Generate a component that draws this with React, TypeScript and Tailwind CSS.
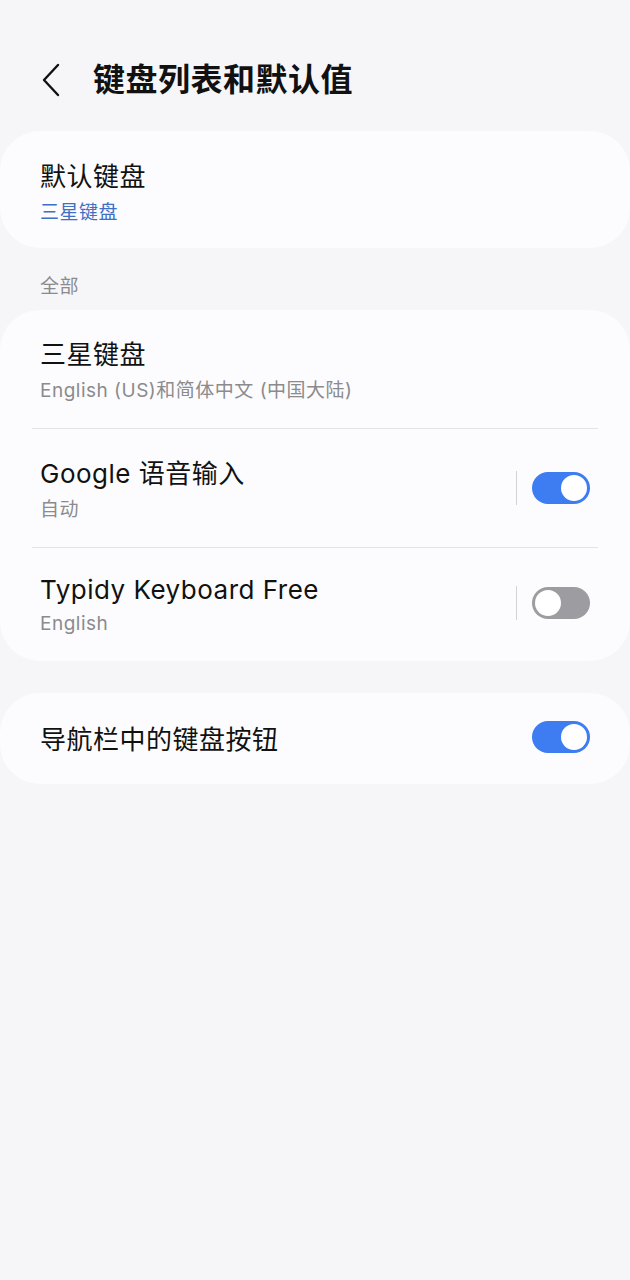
import React from 'react';

const font = { fontFamily: '"Inter", "Noto Sans CJK SC", sans-serif' };

function Toggle({ on }: { on: boolean }) {
  return (
    <div
      className={`flex h-[32px] w-[58px] shrink-0 items-center rounded-full p-[3px] ${
        on ? 'justify-end bg-[#3e7cf2]' : 'justify-start bg-[#9d9da1]'
      }`}
    >
      <div className="h-[26px] w-[26px] rounded-full bg-white" />
    </div>
  );
}

function KeyboardRow({
  title,
  sub,
  toggle,
  last,
}: {
  title: string;
  sub: string;
  toggle?: boolean;
  last?: boolean;
}) {
  return (
    <div>
      <div className={`flex items-center px-[40px] pb-[23px] ${last ? 'pt-[25px]' : 'pt-[28px]'}`}>
        <div className="min-w-0 flex-grow">
          <div className="text-[26px] leading-[34px] text-[#111111]">{title}</div>
          <div className={`${last ? 'mt-[3px]' : 'mt-[5px]'} text-[19px] leading-[28px] text-[#8b8b8d]`}>{sub}</div>
        </div>
        {toggle !== undefined && (
          <div className="mb-[6px] flex items-center">
            <div className="mr-[15px] h-[34px] w-[1.5px] bg-[#d3d3d6]" />
            <Toggle on={toggle} />
          </div>
        )}
      </div>
      {!last && <div className="mx-[32px] h-px bg-[#e4e4e7]" />}
    </div>
  );
}

export default function App() {
  return (
    <div className="min-h-[1280px] w-full bg-[#f6f6f8] tracking-[0.5px]" style={font}>
      {/* Header */}
      <div className="flex items-center pt-[58px]">
        <svg className="ml-[38px]" width="26" height="44" viewBox="0 0 26 44">
          <path d="M20 7 L6 22 L20 37" fill="none" stroke="#111111" strokeWidth="2.4" strokeLinecap="round" strokeLinejoin="round" />
        </svg>
        <h1 className="ml-[29px] text-[32px] font-bold leading-[44px] text-[#111111]">键盘列表和默认值</h1>
      </div>

      {/* Default keyboard */}
      <div className="mt-[29px] rounded-[40px] bg-[#fcfcfe]">
        <div className="pl-[40px] pt-[29px] pb-[21px]">
          <div className="text-[26px] leading-[34px] text-[#111111]">默认键盘</div>
          <div className="mt-[5px] text-[19px] leading-[28px] text-[#3f70c6]">三星键盘</div>
        </div>
      </div>

      <div className="mt-[26px] mb-[10px] pl-[40px] text-[19px] leading-[26px] text-[#8b8b8d]">全部</div>

      {/* All keyboards */}
      <div className="rounded-[40px] bg-[#fcfcfe]">
        <KeyboardRow title="三星键盘" sub="English (US)和简体中文 (中国大陆)" />
        <KeyboardRow title="Google 语音输入" sub="自动" toggle={true} />
        <KeyboardRow title="Typidy Keyboard Free" sub="English" toggle={false} last />
      </div>

      {/* Nav bar keyboard button */}
      <div className="mt-[32px] flex h-[91px] items-center justify-between rounded-[40px] bg-[#fcfcfe] px-[40px]">
        <div className="pt-[3px] text-[26px] leading-[34px] text-[#111111]">导航栏中的键盘按钮</div>
        <div className="mb-[3px]">
          <Toggle on={true} />
        </div>
      </div>
    </div>
  );
}
